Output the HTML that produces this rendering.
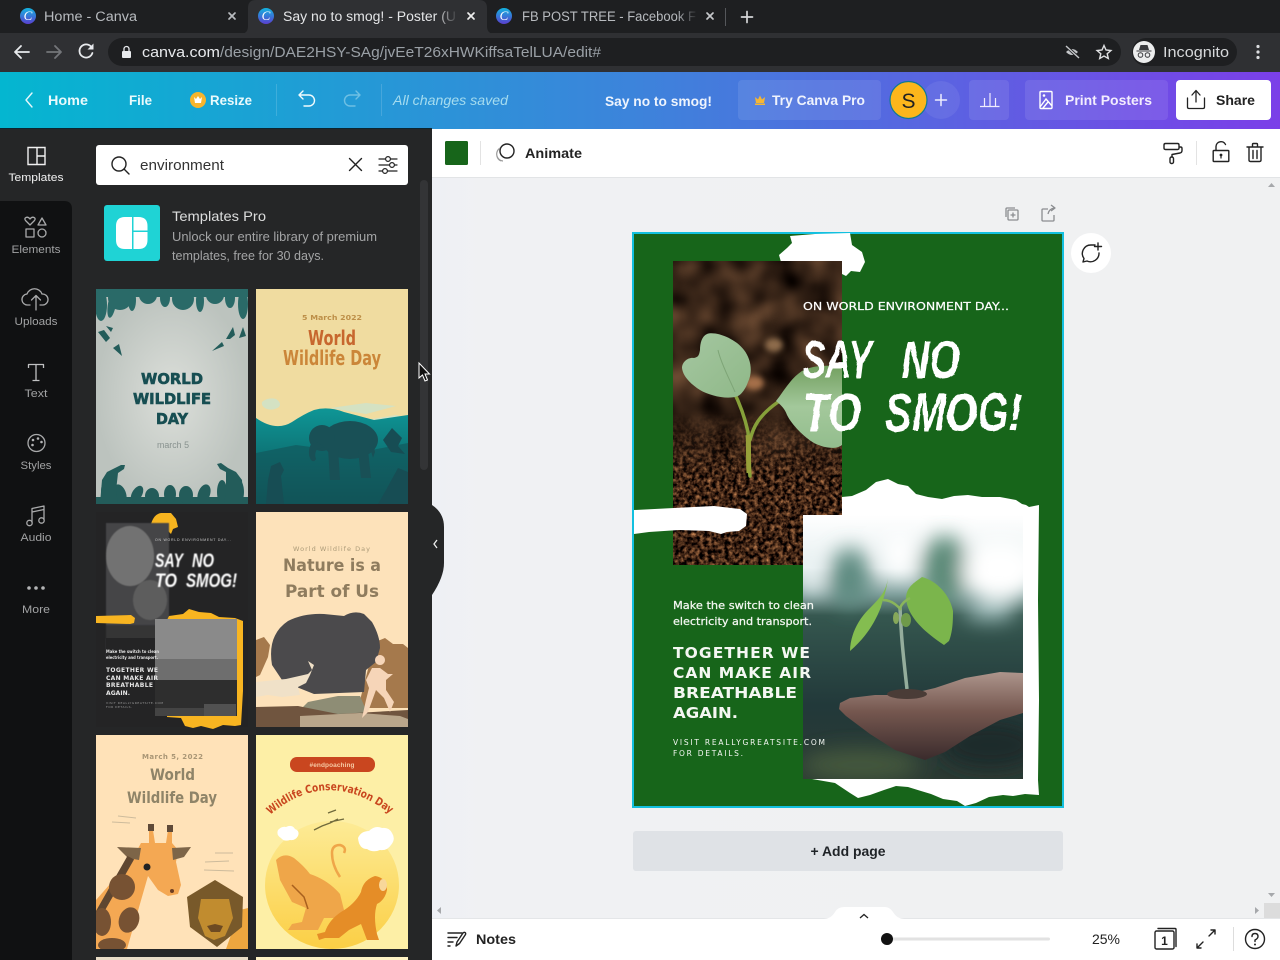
<!DOCTYPE html>
<html><head><meta charset="utf-8"><title>Say no to smog! - Poster</title>
<style>
html,body{margin:0;padding:0;width:1280px;height:960px;overflow:hidden;background:#000}
svg{display:block}
text{font-family:"Liberation Sans",sans-serif}
.d{font-family:"DejaVu Sans",sans-serif}
.ic{fill:none;stroke:#222;stroke-width:1.4;stroke-linecap:round;stroke-linejoin:round}
.si{fill:none;stroke-width:1.3;stroke:#a9aaab;stroke-linejoin:round}
</style></head><body>
<svg width="1280" height="960" viewBox="0 0 1280 960" xmlns="http://www.w3.org/2000/svg">
<defs>
<linearGradient id="hdr" x1="0" x2="1" y1="0" y2="0"><stop offset="0" stop-color="#04b6d0"/><stop offset=".5" stop-color="#3d83db"/><stop offset="1" stop-color="#7b3fe8"/></linearGradient>
<linearGradient id="fav" x1="0" x2="0" y1="0" y2="1"><stop offset="0" stop-color="#12b3df"/><stop offset="1" stop-color="#5a3fd0"/></linearGradient>
<linearGradient id="fade1" x1="0" x2="1"><stop offset="0" stop-color="#2f3033" stop-opacity="0"/><stop offset="1" stop-color="#2f3033"/></linearGradient>
<linearGradient id="fade2" x1="0" x2="1"><stop offset="0" stop-color="#1e1f21" stop-opacity="0"/><stop offset="1" stop-color="#1e1f21"/></linearGradient>
<linearGradient id="canvasbg" x1="0" x2="1"><stop offset="0" stop-color="#eef0f5"/><stop offset=".06" stop-color="#f0f1f3"/><stop offset="1" stop-color="#f0f1f2"/></linearGradient>
<filter id="soilF" x="0" y="0" width="100%" height="100%" color-interpolation-filters="sRGB"><feTurbulence type="fractalNoise" baseFrequency="0.24" numOctaves="3" seed="4"/><feColorMatrix values="1.25 0 0 0 -.38  .88 0 0 0 -.3  .56 0 0 0 -.2  0 0 0 0 1"/></filter>
<filter id="soilB" x="0" y="0" width="100%" height="100%" color-interpolation-filters="sRGB"><feTurbulence type="fractalNoise" baseFrequency="0.03" numOctaves="2" seed="9"/><feColorMatrix values=".55 0 0 0 -.06  .4 0 0 0 -.06  .28 0 0 0 -.05  0 0 0 0 1"/></filter>
<filter id="brush" x="-5%" y="-10%" width="110%" height="120%"><feTurbulence type="fractalNoise" baseFrequency="0.08" numOctaves="2" seed="3" result="n"/><feDisplacementMap in="SourceGraphic" in2="n" scale="3.5" xChannelSelector="R" yChannelSelector="G"/><feGaussianBlur stdDeviation=".35"/></filter>
<linearGradient id="soilMask" x1="0" x2="0" y1="0" y2="1"><stop offset="0" stop-color="#000"/><stop offset=".5" stop-color="#000"/><stop offset=".72" stop-color="#fff"/><stop offset="1" stop-color="#fff"/></linearGradient>
<mask id="soilM" maskUnits="userSpaceOnUse" x="673" y="261" width="169" height="304"><rect x="673" y="261" width="169" height="304" fill="url(#soilMask)"/></mask>
<clipPath id="soilC"><rect x="673" y="261" width="169" height="304"/></clipPath>
<clipPath id="handC"><rect x="803" y="515" width="220" height="264"/></clipPath>
<clipPath id="t1C"><rect x="96" y="289" width="152" height="215"/></clipPath>
<clipPath id="t2C"><rect x="256" y="289" width="152" height="215"/></clipPath>
<clipPath id="t5C"><rect x="96" y="735" width="152" height="214"/></clipPath>
<clipPath id="t6C"><rect x="256" y="735" width="152" height="214"/></clipPath>
<filter id="b12" x="-60%" y="-60%" width="220%" height="220%"><feGaussianBlur stdDeviation="10"/></filter>
<filter id="b1" x="-10%" y="-10%" width="120%" height="120%"><feGaussianBlur stdDeviation=".5"/></filter>
<filter id="b3" x="-30%" y="-30%" width="160%" height="160%"><feGaussianBlur stdDeviation="3"/></filter>
<linearGradient id="leafL" x1="0" y1="0" x2="1" y2="1"><stop offset="0" stop-color="#a5c7a1"/><stop offset="1" stop-color="#8fb888"/></linearGradient>
<linearGradient id="leafR" x1="0" y1="0" x2="0" y2="1"><stop offset="0" stop-color="#73a060"/><stop offset=".5" stop-color="#a3c89b"/><stop offset="1" stop-color="#93bd8d"/></linearGradient>
<linearGradient id="handBg" x1="0" x2="0" y1="0" y2="1"><stop offset="0" stop-color="#ffffff"/><stop offset=".2" stop-color="#e6eff0"/><stop offset=".3" stop-color="#7f9f9c"/><stop offset=".38" stop-color="#35574f"/><stop offset=".72" stop-color="#22393a"/><stop offset="1" stop-color="#2c3a33"/></linearGradient>
<linearGradient id="handSkin" x1="0" x2="0" y1="0" y2="1"><stop offset="0" stop-color="#ad958c"/><stop offset=".45" stop-color="#75574f"/><stop offset="1" stop-color="#3a2b2c"/></linearGradient>
<radialGradient id="t1bg"><stop offset="0" stop-color="#dcdfda"/><stop offset="1" stop-color="#bcc3be"/></radialGradient>
<linearGradient id="t2h" x1="0" x2="0" y1="0" y2="1"><stop offset="0" stop-color="#0f9696"/><stop offset=".5" stop-color="#0d7375"/><stop offset="1" stop-color="#10484b"/></linearGradient>
<linearGradient id="t6c" x1="0" x2="0" y1="0" y2="1"><stop offset="0" stop-color="#fdeb96"/><stop offset="1" stop-color="#fbcf45"/></linearGradient>
<path id="arc" d="M270 815 Q332 762 400 822"/>
</defs>

<!-- Browser chrome -->
<rect width="1280" height="34" fill="#1e1f21"/>
<rect y="33" width="1280" height="39" fill="#2f3033"/>
<path d="M240 34 q8 0 8 -8 V8 q0 -8 8 -8 H479 q8 0 8 8 V26 q0 8 8 8Z" fill="#2f3033"/>
<g fill="url(#fav)"><circle cx="28" cy="16" r="8"/><circle cx="266" cy="16" r="8"/><circle cx="504" cy="16" r="8"/></g>
<g fill="#fff" font-size="13" font-style="italic" text-anchor="middle"><text x="28" y="20" style="font-family:'Liberation Serif',serif">C</text><text x="266" y="20" style="font-family:'Liberation Serif',serif">C</text><text x="504" y="20" style="font-family:'Liberation Serif',serif">C</text></g>
<text x="44" y="21" font-size="13.5" fill="#b8bbbf" textLength="93" lengthAdjust="spacingAndGlyphs">Home - Canva</text>
<text x="283" y="21" font-size="13.5" fill="#e4e5e7" textLength="173" lengthAdjust="spacingAndGlyphs">Say no to smog! - Poster (U</text>
<rect x="436" y="4" width="22" height="24" fill="url(#fade1)"/>
<text x="522" y="21" font-size="13.5" fill="#b8bbbf" textLength="174" lengthAdjust="spacingAndGlyphs">FB POST TREE - Facebook F</text>
<rect x="676" y="4" width="22" height="24" fill="url(#fade2)"/>
<g stroke-width="1.7" fill="none" stroke-linecap="round">
<path d="M229 13l6 6m0-6l-6 6" stroke="#b8bbbf"/><path d="M468 13l6 6m0-6l-6 6" stroke="#eee"/><path d="M707 13l6 6m0-6l-6 6" stroke="#c6c8cb"/>
<path d="M747 11.500v11M741.500 17h11" stroke="#d5d6d8"/></g>
<rect x="725" y="8" width="1" height="18" fill="#55575b"/>
<rect x="108" y="38" width="1013" height="28" rx="14" fill="#1e1f21"/>
<g fill="none" stroke-width="1.800" stroke-linecap="round" stroke-linejoin="round">
<path d="M29 52H15m6-6l-6 6 6 6" stroke="#e8eaed"/><path d="M47 52h14m-6-6l6 6-6 6" stroke="#74767a"/>
<path d="M92 48a6.600 6.600 0 1 0 .4 5" stroke="#e8eaed"/></g><path d="M93.500 43.500v6h-6z" fill="#e8eaed"/>
<rect x="122" y="51" width="9" height="7" rx="1" fill="#e8eaed"/><path d="M124 51v-2a2.500 2.500 0 0 1 5 0v2" fill="none" stroke="#e8eaed" stroke-width="1.300"/>
<text x="142" y="57" font-size="14.500" fill="#e8eaed" textLength="78" lengthAdjust="spacingAndGlyphs">canva.com</text>
<text x="220" y="57" font-size="14.500" fill="#9aa0a6" textLength="381" lengthAdjust="spacingAndGlyphs">/design/DAE2HSY-SAg/jvEeT26xHWKiffsaTelLUA/edit#</text>
<path d="M1066 52q6-6 12 0q-6 6-12 0z" fill="#c5c7ca"/><path d="M1066 46l13 12" stroke="#1e1f21" stroke-width="3"/><path d="M1066 46l13 12" stroke="#c5c7ca" stroke-width="1.400"/>
<path d="M1104 45.500l2 4.500 4.900.500-3.700 3.200 1.100 4.800-4.300-2.500-4.300 2.500 1.100-4.800-3.700-3.200 4.900-.500z" fill="none" stroke="#dfe0e2" stroke-width="1.400"/>
<rect x="1132" y="38" width="105" height="28" rx="14" fill="#1e1f21"/>
<circle cx="1144" cy="52" r="11" fill="#eceded"/>
<path d="M1139 50l1.500-5h7l1.500 5zM1136.500 50.500h15v1h-15z" fill="#3a3b3e"/><circle cx="1140.500" cy="55" r="2.300" fill="none" stroke="#3a3b3e"/><circle cx="1147.500" cy="55" r="2.300" fill="none" stroke="#3a3b3e"/>
<text x="1163" y="57" font-size="14.500" fill="#d6d8da" textLength="66" lengthAdjust="spacingAndGlyphs">Incognito</text>
<g fill="#dcdde0"><circle cx="1258" cy="46.500" r="1.600"/><circle cx="1258" cy="52" r="1.600"/><circle cx="1258" cy="57.500" r="1.600"/></g>

<!-- Canva header -->
<rect y="72" width="1280" height="57" fill="url(#hdr)"/>
<rect x="0" y="128" width="432" height="1" fill="#0b2530"/>
<path d="M32 93l-6 7 6 7" fill="none" stroke="#e6f7fb" stroke-width="1.400" stroke-linecap="round" stroke-linejoin="round"/>
<g fill="#fff" font-size="14" font-weight="bold">
<text x="48" y="105" textLength="40" lengthAdjust="spacingAndGlyphs" fill="#e9fafc">Home</text>
<text x="129" y="105" textLength="23" lengthAdjust="spacingAndGlyphs" fill="#e9fafc">File</text>
<text x="210" y="105" textLength="42" lengthAdjust="spacingAndGlyphs" fill="#e9fafc">Resize</text>
<text x="605" y="106" textLength="107" lengthAdjust="spacingAndGlyphs" fill="#eef4fd">Say no to smog!</text>
<text x="772" y="105" textLength="93" lengthAdjust="spacingAndGlyphs" fill="#eef2fd">Try Canva Pro</text>
<text x="1065" y="105" textLength="87" lengthAdjust="spacingAndGlyphs" fill="#f2ecfe">Print Posters</text>
</g>
<circle cx="198" cy="100" r="8" fill="#f6b52c"/><path d="M194 97l2 2 2-3 2 3 2-2-1 6h-6z" fill="#fff"/>
<rect x="276" y="84" width="1" height="32" fill="#fff" opacity=".15"/><rect x="381" y="84" width="1" height="32" fill="#fff" opacity=".15"/>
<path d="M299 95h10a5.500 5.500 0 0 1 0 11h-5M303 91l-4 4 4 4" fill="none" stroke="#f0fbfd" stroke-width="1.400" stroke-linecap="round" stroke-linejoin="round"/>
<path d="M360 95h-10a5.500 5.500 0 0 0 0 11h5M356 91l4 4-4 4" fill="none" stroke="#8fd0ea" stroke-width="1.400" stroke-linecap="round" stroke-linejoin="round" opacity=".7"/>
<text x="393" y="105" font-size="14" font-style="italic" fill="#a5dcef" textLength="115" lengthAdjust="spacingAndGlyphs">All changes saved</text>
<g fill="#fff" fill-opacity=".09">
<rect x="738" y="80" width="143" height="40" rx="4"/><circle cx="941" cy="100" r="19" fill-opacity=".07"/><rect x="969" y="80" width="40" height="40" rx="4"/><rect x="1025" y="80" width="143" height="40" rx="4"/></g>
<path d="M755 97l3 2.500 2-4 2 4 3-2.500-1 6h-8z" fill="#f7b733"/><rect x="755" y="103.500" width="10" height="1.500" fill="#f7b733"/>
<circle cx="908.500" cy="100" r="18.500" fill="#fcb61c" stroke="#0f7a94" stroke-width="1.200"/>
<text x="908.500" y="108" font-size="21" fill="#222" text-anchor="middle">S</text>
<path d="M941 94.500v11M935.500 100h11" stroke="#eef" stroke-width="1.500" stroke-linecap="round"/>
<path d="M980 106.500h19.500M984.500 106v-8M990 106V93M995.500 106v-8" stroke="#f0ecfe" stroke-width="1.200" fill="none"/>
<path d="M1040 92.500q0-1 1-1h10q1 0 1 1v15q0 1-1 1h-10q-1 0-1-1zM1040 107l6-8 6 7M1043 108l5-6" fill="none" stroke="#fff" stroke-width="1.400"/><circle cx="1044" cy="95.500" r="1.300" fill="#fff"/>
<rect x="1176" y="80" width="95" height="40" rx="4" fill="#fff"/>
<path d="M1187.500 98v9q0 1.500 1.500 1.500h14q1.500 0 1.500-1.500v-9M1196 102V91M1192 95l4-4.500 4 4.500" fill="none" stroke="#222" stroke-width="1.300" stroke-linecap="round" stroke-linejoin="round"/>
<text x="1216" y="105" font-size="14" font-weight="bold" fill="#222" textLength="39" lengthAdjust="spacingAndGlyphs">Share</text>

<!-- Canvas region -->
<rect x="432" y="129" width="848" height="790" fill="url(#canvasbg)"/>
<rect x="432" y="129" width="848" height="48" fill="#fff"/><rect x="432" y="177" width="848" height="1" fill="#e2e4e6"/>
<rect x="445" y="141" width="23" height="24" rx="1.500" fill="#17651a"/><rect x="480" y="141" width="1" height="24" fill="#e3e3e3"/>
<circle cx="507" cy="151" r="7" fill="none" stroke="#222" stroke-width="1.400"/><path d="M500 148a7.500 7.500 0 0 0 1 13 M497 152a7 7 0 0 0 6 9" fill="none" stroke="#999" stroke-width="1.200"/>
<text x="525" y="158" font-size="14" font-weight="bold" fill="#222" textLength="57" lengthAdjust="spacingAndGlyphs">Animate</text>
<g class="ic"><path d="M1164 145q0-1.500 1.500-1.500h12q1.500 0 1.500 1.500v3q0 1.500-1.500 1.500h-12q-1.500 0-1.500-1.500zM1179 147h1.500q1.500 0 1.500 1.500v2q0 2-2 2.500l-8 1.500v2"/><rect x="1170" y="157" width="3.500" height="6.500" rx="1.500"/>
<path d="M1214 150.500h14q.8 0 .8.8v9.400q0 .8-.8.8h-14q-.8 0-.8-.8v-9.400q0-.8.8-.8zM1216 150v-3.500a5 5 0 0 1 9.500-2"/>
<path d="M1247 147h16M1252.500 146.500v-2q0-1 1-1h3q1 0 1 1v2M1249 147.500v12.500q0 1.500 1.500 1.500h9q1.500 0 1.500-1.500v-12.500M1253 150.500v8M1257 150.500v8"/></g>
<rect x="1196" y="141" width="1" height="24" fill="#e3e3e3"/>
<circle cx="1221" cy="155" r="1.400" fill="#222"/><rect x="1220.400" y="155" width="1.200" height="3.500" fill="#222"/>
<g fill="none" stroke="#8b8d90" stroke-width="1.300" stroke-linejoin="round"><rect x="1008" y="210" width="10" height="10" rx="1"/><path d="M1006 217v-8q0-1 1-1h8"/><path d="M1013 212.500v5M1010.500 215h5"/><path d="M1048 209h-5q-1 0-1 1v10q0 1 1 1h10q1 0 1-1v-5M1048 214q1-5 6-6M1051 205l4 3-4 3"/></g>
<path d="M1268 187l3.500-4 3.500 4z" fill="#a6a8ab"/><path d="M1268 893l3.500 4 3.500-4z" fill="#a6a8ab"/>
<rect x="1264" y="903" width="16" height="16" fill="#dcdcdc"/>
<path d="M441 907l-4 3.500 4 3.500z" fill="#a6a8ab"/><path d="M1255 907l4 3.500-4 3.500z" fill="#a6a8ab"/>

<!-- Poster -->
<rect x="633" y="233" width="430" height="574" fill="#17651a" stroke="#13c0df" stroke-width="2"/>
<path d="M790 236L815 234L850 233L852 245L862 252L865 262L860 272L851 271L846 276L842 274L842 262L781 262L779 255L787 248L792 243Z" fill="#fff"/>
<g clip-path="url(#soilC)">
<rect x="673" y="261" width="169" height="304" filter="url(#soilB)"/>
<g mask="url(#soilM)"><rect x="673" y="261" width="169" height="304" filter="url(#soilF)"/></g>
<g filter="url(#b3)"><ellipse cx="774" cy="345" rx="9" ry="7" fill="#8e6c4c"/><ellipse cx="754" cy="383" rx="10" ry="7" fill="#a56f48"/></g>
<path d="M750 476c-2-20-1-35-2-44-3-14-8-28-15-42M750 440c3-12 8-24 28-38" fill="none" stroke="#86a03a" stroke-width="3.500" stroke-linecap="round"/>
<path d="M749 473c-1-18 0-28-1-38" stroke="#97a03a" stroke-width="5" fill="none"/>
<path d="M707 334c8-3 28 4 37 16 7 9 9 22 4 32-2 6-6 12-10 14-10 4-28 0-38-6-8-5-17-13-18-22 0-6 6-11 12-10 4-1 5-2 6-8 0-7 2-14 7-16z" fill="url(#leafL)"/>
<path d="M735 392c-4-10-14-28-17-42" stroke="#7ea577" stroke-width="1" fill="none"/>
<path d="M776 401c8-10 14-22 26-30 12-6 26-6 40-4v78c-6 5-18 3-28-2-10-6-22-18-27-28-2-6-6-10-11-14z" fill="url(#leafR)"/>
</g>
<g filter="url(#brush)" fill="#fff" font-weight="bold" font-style="italic">
<text x="802" y="378" font-size="54" textLength="70" lengthAdjust="spacingAndGlyphs">SAY</text>
<text x="901" y="378" font-size="54" textLength="59" lengthAdjust="spacingAndGlyphs">NO</text>
<text x="803" y="431" font-size="54" textLength="58" lengthAdjust="spacingAndGlyphs">TO</text>
<text x="885" y="431" font-size="54" textLength="137" lengthAdjust="spacingAndGlyphs">SMOG!</text>
</g>
<text class="d" x="803" y="310" font-size="11" fill="#fff" stroke="#fff" stroke-width=".2" textLength="206" lengthAdjust="spacingAndGlyphs">ON WORLD ENVIRONMENT DAY...</text>
<path d="M634 510l40-2 40-2 26 3 7 5-1 12-7 5-12 1-6 2-12-3-30-1-30 2-15 2z" fill="#fff"/>
<path d="M842 497L852 496L866 490L876 482L888 479L898 484L908 486L916 494L928 497L942 499L954 496L968 495L982 497L1000 497L1016 500L1022 504L1026 505L1029 507L1039 505L1038 600L1039 700L1038 780L1039 795L1025 794L1013 796L1003 795L989 797L976 803L965 806L957 801L943 799L931 794L921 791L908 787L896 786L884 790L870 795L858 798L850 793L835 783L812 779L803 515L842 515Z" fill="#fff"/>
<g clip-path="url(#handC)">
<rect x="803" y="515" width="220" height="264" fill="url(#handBg)"/>
<g filter="url(#b12)">
<ellipse cx="850" cy="578" rx="20" ry="30" fill="#5d8a80"/>
<ellipse cx="945" cy="570" rx="24" ry="34" fill="#5b8a78"/>
<ellipse cx="1000" cy="570" rx="38" ry="30" fill="#ffffff"/>
<ellipse cx="900" cy="555" rx="16" ry="22" fill="#fff"/>
<ellipse cx="812" cy="580" rx="10" ry="16" fill="#f2f8f9"/>
<ellipse cx="990" cy="610" rx="26" ry="10" fill="#a8c6c6"/>
<ellipse cx="860" cy="765" rx="60" ry="16" fill="#45593e"/>
<ellipse cx="990" cy="745" rx="50" ry="24" fill="#1b2a2c"/>
</g>
<path d="M1023 673L1000 672L965 678L935 688L905 695L875 695L850 698L840 703L839 709L846 716L870 734L895 750L925 760L945 752L970 736L1000 720L1023 713Z" fill="url(#handSkin)"/>
<path d="M900 607c1 30 4 55 7 82" fill="none" stroke="#94ad9c" stroke-width="3.500"/>
<ellipse cx="907" cy="694" rx="20" ry="5" fill="#4a3c37"/>
<path d="M888 578c-2 14-8 20-20 32-10 10-18 26-18 41 14-12 24-26 31-44 2-8 5-14 7-29z" fill="#84bd50"/>
<path d="M922 577c-8 6-16 10-16 22 2 16 14 30 38 46l5-4c4-10 4-22 4-30-3-16-16-30-31-34z" fill="#7bb54c"/>
<path d="M883 600c8 0 14 5 18 10M910 598c-4 2-8 5-10 10" fill="none" stroke="#8ab55b" stroke-width="2.500"/>
<ellipse cx="906" cy="620" rx="5" ry="7" fill="#6f9a4a"/><ellipse cx="896" cy="618" rx="3" ry="6" fill="#86a85a"/>
</g>
<g fill="#f4f7f2" stroke="#f4f7f2" stroke-width=".25">
<text class="d" x="673" y="609" font-size="11" textLength="141" lengthAdjust="spacingAndGlyphs">Make the switch to clean</text>
<text class="d" x="673" y="625" font-size="11" textLength="139" lengthAdjust="spacingAndGlyphs">electricity and transport.</text></g>
<g fill="#f4f7f2">
<text class="d" x="673" y="658" font-size="15.500" font-weight="bold" textLength="137" lengthAdjust="spacing">TOGETHER WE</text>
<text class="d" x="673" y="678" font-size="15.500" font-weight="bold" textLength="138" lengthAdjust="spacing">CAN MAKE AIR</text>
<text class="d" x="673" y="698" font-size="15.500" font-weight="bold" textLength="124" lengthAdjust="spacingAndGlyphs">BREATHABLE</text>
<text class="d" x="673" y="718" font-size="15.500" font-weight="bold" textLength="65" lengthAdjust="spacingAndGlyphs">AGAIN.</text>
<text class="d" x="673" y="745" font-size="7.500" textLength="152" lengthAdjust="spacing">VISIT REALLYGREATSITE.COM</text>
<text class="d" x="673" y="756" font-size="7.500" textLength="70" lengthAdjust="spacing">FOR DETAILS.</text>
</g>
<circle cx="1091" cy="253" r="20" fill="#fff"/>
<path d="M1095 245h-4a8.500 8.500 0 0 0-7 13.500l-1 3.500 4-1a8.500 8.500 0 0 0 12-8M1098 243v7M1094.500 246.500h7" fill="none" stroke="#222" stroke-width="1.400" stroke-linecap="round" stroke-linejoin="round"/>
<rect x="633" y="831" width="430" height="40" rx="3" fill="#dfe2e6"/>
<text x="848" y="856" font-size="14" font-weight="bold" fill="#1f2327" text-anchor="middle" textLength="75" lengthAdjust="spacingAndGlyphs">+ Add page</text>

<!-- Footer -->
<rect x="432" y="919" width="848" height="41" fill="#fff"/><rect x="432" y="918" width="848" height="1" fill="#e4e6e8"/>
<path d="M823 919q8 0 12-7 3-5 9-5h40q6 0 9 5 4 7 12 7z" fill="#fff"/>
<path d="M860 918l4-3.500 4 3.500" fill="none" stroke="#222" stroke-width="1.300"/>
<g fill="none" stroke="#222" stroke-width="1.400" stroke-linecap="round" stroke-linejoin="round"><path d="M448 933h14M448 937.500h9M448 942h5M448 946h2"/><path d="M456 946l1-4 6-9q1-1 2-.5t.5 2l-6 9z"/></g>
<text x="476" y="944" font-size="14" font-weight="bold" fill="#222" textLength="40" lengthAdjust="spacingAndGlyphs">Notes</text>
<rect x="892" y="937.500" width="158" height="3" rx="1.500" fill="#e2e2e2"/><circle cx="887" cy="939" r="6" fill="#111"/>
<text x="1092" y="944" font-size="14" fill="#222" textLength="28" lengthAdjust="spacingAndGlyphs">25%</text>
<g fill="none" stroke="#222" stroke-width="1.400" stroke-linejoin="round" stroke-linecap="round"><rect x="1155" y="931" width="19" height="18" rx="1.500"/><path d="M1158 928.500h17q1 0 1 1v17"/>
<path d="M1209 936l6-6M1211 930h4v4M1203 942l-6 6M1201 948h-4v-4"/><circle cx="1255" cy="939" r="9.500"/><path d="M1252 936.500q0-3 3-3t3 3q0 2-3 3.500v1.500"/></g>
<text x="1164.500" y="945" font-size="12" font-weight="bold" fill="#222" text-anchor="middle">1</text><circle cx="1255" cy="944.500" r="1" fill="#222"/>
<rect x="1233" y="927" width="1" height="24" fill="#ddd"/>

<!-- Panel -->
<rect x="0" y="129" width="432" height="831" fill="#252627"/>
<path d="M432 505q12 8 12 22v36q0 14-12 32z" fill="#252627"/>
<path d="M437 540l-3 4 3 4" fill="none" stroke="#eee" stroke-width="1.300"/>
<rect x="0" y="201" width="72" height="759" fill="#101112"/><path d="M64 201h8v8q0-8-8-8z" fill="#252627"/>
<rect x="420" y="180" width="8" height="290" rx="4" fill="#333436"/>
<path d="M419 363v15l3.500-3 2.500 6 2.500-1-2.500-6h4.500z" fill="#111" stroke="#fff" stroke-width="1"/>
<rect x="96" y="145" width="312" height="40" rx="3" fill="#fff"/>
<g fill="none" stroke="#222" stroke-width="1.400" stroke-linecap="round"><circle cx="119" cy="164" r="7"/><path d="M124 169l5 5"/><path d="M349.500 158.500l12 12m0-12l-12 12"/><path d="M379 159h18M379 165h18M379 171h18" stroke-width="1.200"/></g>
<g fill="#fff" stroke="#222" stroke-width="1.200"><circle cx="388" cy="159" r="2.400"/><circle cx="392" cy="165" r="2.400"/><circle cx="385" cy="171" r="2.400"/></g>
<text x="140" y="170" font-size="14.500" fill="#333" textLength="84" lengthAdjust="spacingAndGlyphs">environment</text>
<rect x="104" y="205" width="56" height="56" rx="3" fill="#1fd3d5"/>
<path d="M116 226q0-9 9-9h7v32h-7q-9 0-9-9z M133.500 217h5q9 0 9 9v4.500h-14z M133.500 232h14v8q0 9-9 9h-5z" fill="#fff"/>
<text x="172" y="221" font-size="14" fill="#dcdddd" textLength="94" lengthAdjust="spacingAndGlyphs">Templates Pro</text>
<text x="172" y="241" font-size="12.500" fill="#a3a4a5" textLength="205" lengthAdjust="spacingAndGlyphs">Unlock our entire library of premium</text>
<text x="172" y="260" font-size="12.500" fill="#a3a4a5" textLength="152" lengthAdjust="spacingAndGlyphs">templates, free for 30 days.</text>

<!-- Sidebar -->
<g font-size="11" text-anchor="middle" fill="#a1a2a3">
<text x="36" y="181" fill="#f2f2f2" textLength="55" lengthAdjust="spacingAndGlyphs">Templates</text>
<text x="36" y="253" textLength="49" lengthAdjust="spacingAndGlyphs">Elements</text>
<text x="36" y="325" textLength="43" lengthAdjust="spacingAndGlyphs">Uploads</text>
<text x="36" y="397" textLength="23" lengthAdjust="spacingAndGlyphs">Text</text>
<text x="36" y="469" textLength="31" lengthAdjust="spacingAndGlyphs">Styles</text>
<text x="36" y="541" textLength="31" lengthAdjust="spacingAndGlyphs">Audio</text>
<text x="36" y="613" textLength="28" lengthAdjust="spacingAndGlyphs">More</text></g>
<path d="M28 147.500h17v17H28zM37 147.500v17M37 156h8" fill="none" stroke="#f0f0f0" stroke-width="1.400"/>
<g class="si">
<path d="M30 225l-4.500-4.500q-1.500-2 .5-3 2-1 4 1.500 2-2.500 4-1.500 2 1 .5 3zM38 225l4-7 4 7zM26 229h8v8h-8z"/><circle cx="42" cy="233" r="4"/>
<path d="M30 305h-2a5.500 5.500 0 0 1-1-11 8 8 0 0 1 15 0 5.500 5.500 0 0 1 1 11h-3M36 310v-14M31.500 300l4.500-4.500 4.500 4.500" stroke-linecap="round"/>
<path d="M28.500 368v-3.500h15v3.500M36 364.500v16M32.500 380.500h7" stroke="#c0c1c2"/>
<circle cx="36.500" cy="443" r="8.500"/>
<path d="M32 522.500v-14l12-2.500v14" /><circle cx="29.500" cy="523" r="2.700"/><circle cx="41.500" cy="520.500" r="2.700"/><path d="M32 512l12-2.500"/></g>
<g fill="#b4b5b6"><circle cx="33" cy="440" r="1.300"/><circle cx="38" cy="438.500" r="1.300"/><circle cx="41.500" cy="442" r="1.300"/><circle cx="32.500" cy="445" r="1.300"/><circle cx="29" cy="588" r="1.800"/><circle cx="36" cy="588" r="1.800"/><circle cx="43" cy="588" r="1.800"/></g>

<!-- T1 -->
<rect x="96" y="289" width="152" height="215" fill="url(#t1bg)"/>
<g clip-path="url(#t1C)">
<g fill="#2a6a68">
<rect x="96" y="289" width="152" height="8"/>
<circle cx="120" cy="298" r="12"/><circle cx="183" cy="299" r="11"/><circle cx="148" cy="295" r="9"/><circle cx="215" cy="295" r="9"/>
<ellipse cx="101" cy="305" rx="6" ry="16"/><ellipse cx="112" cy="304" rx="4" ry="14" transform="rotate(10 112 304)"/><ellipse cx="132" cy="300" rx="4" ry="11"/>
<ellipse cx="165" cy="298" rx="5" ry="9"/><ellipse cx="200" cy="301" rx="4" ry="11"/>
<ellipse cx="243" cy="304" rx="5" ry="15"/><ellipse cx="230" cy="298" rx="5" ry="10"/>
</g>
<g fill="#235c5a">
<rect x="96" y="497" width="152" height="8"/>
<ellipse cx="106" cy="492" rx="5" ry="12"/><ellipse cx="120" cy="494" rx="6" ry="10" transform="rotate(-20 120 494)"/><ellipse cx="137" cy="494" rx="5" ry="9" transform="rotate(30 137 494)"/>
<ellipse cx="152" cy="496" rx="7" ry="8"/><ellipse cx="170" cy="494" rx="6" ry="9"/><ellipse cx="186" cy="495" rx="7" ry="9"/><ellipse cx="204" cy="494" rx="6" ry="10" transform="rotate(20 204 494)"/><ellipse cx="222" cy="492" rx="5" ry="12"/><ellipse cx="238" cy="492" rx="6" ry="13"/>
<path d="M100 504l2-24 5-8 8-4 6-3 4 0 -1 4-6 4-2 18 2 13zM243 504l-1-24-6-8-8-4-7-5-4 1 3 5 6 3 0 20-2 12z"/>
<path d="M98 332l8 10 4-4-6-8zM113 348l9 8-3-12zM106 326l5 6 2-4zM212 351l10-9 2 4zM226 339l7-12 2 8-5 4zM243 327l3 9-7 2z"/>
</g></g>
<g fill="#174e52" font-weight="bold">
<text class="d" x="141" y="384" font-size="15" textLength="62" lengthAdjust="spacingAndGlyphs" stroke="#174e52" stroke-width=".6">WORLD</text>
<text class="d" x="133" y="404" font-size="15" textLength="78" lengthAdjust="spacingAndGlyphs" stroke="#174e52" stroke-width=".6">WILDLIFE</text>
<text class="d" x="156" y="424" font-size="15" textLength="32" lengthAdjust="spacingAndGlyphs" stroke="#174e52" stroke-width=".6">DAY</text></g>
<text x="157" y="448" font-size="9" fill="#88928f" textLength="32" lengthAdjust="spacingAndGlyphs">march 5</text>

<!-- T2 -->
<rect x="256" y="289" width="152" height="215" fill="#f0dca0"/>
<text class="d" x="302" y="320" font-size="7" font-weight="bold" fill="#bd8f48" textLength="60" lengthAdjust="spacingAndGlyphs">5 March 2022</text>
<text class="d" x="308" y="345" font-size="20" font-weight="bold" fill="#c7672e" textLength="48" lengthAdjust="spacingAndGlyphs">World</text>
<text class="d" x="283" y="365" font-size="20" font-weight="bold" fill="#cb8639" textLength="98" lengthAdjust="spacingAndGlyphs">Wildlife Day</text>
<g clip-path="url(#t2C)">
<path d="M262 402q6-5 14-3 6 4 3 8-6 4-12 2-6-2-5-7zM330 408l36-5 30 3-30 8zM366 420l30-5 12 3v5l-20 2z" fill="#c8e4d2" opacity=".7"/>
<path d="M256 418q20 14 36 4 12-8 22-12 14-4 30 2l30 8 34-5v90H256z" fill="url(#t2h)"/>
<path d="M256 453l40-8 60 8 52-10v61H256z" fill="#12595d" opacity=".7"/>
<g fill="#195056"><ellipse cx="350" cy="440" rx="28" ry="19"/><circle cx="322" cy="438" r="13"/><path d="M313 440q-7 12-2 20 3 3 5-1-2-5 1-10l8-2zM328 448h10l2 32h-10zM358 450h10l3 28h-10zM372 438l3 14-2 6-4-14z"/></g>
<path d="M392 428l10 10-4 8 7 8-14-2-8-12zM386 490l12-22 10 4v32h-30zM268 480l3-14 9-4 4 8-3 6 3 28h-18z" fill="#174d54"/>
</g>

<!-- T3 -->
<rect x="96" y="512" width="152" height="215" fill="#242425"/>
<path d="M147 530l4-6q3-10 10-11h10l5 6 2 8-5 2-2 5-4-4-20 2z" fill="#f6b41f"/>
<g filter="url(#b1)"><rect x="106" y="523" width="63" height="136" fill="#454546"/><ellipse cx="130" cy="556" rx="24" ry="30" fill="#727272"/><ellipse cx="150" cy="600" rx="17" ry="20" fill="#5d5d5d"/><rect x="106" y="625" width="63" height="14" fill="#353536"/></g>
<rect x="106" y="638" width="63" height="22" fill="#242425"/>
<path d="M96 616l35-1 4 3-1 5-4 1-34-1z" fill="#f8b521"/>
<path d="M165 624l4-8 14-2 6-5 10 3 12 1 8 4 16 1 8 3 0 70-2 34-6 1-12-1-10 4-12-3-8 2-8-2-4-8-14-1-1-90z" fill="#f8b521"/>
<rect x="155" y="619" width="82" height="97" fill="#6e6e6e"/><rect x="155" y="619" width="82" height="40" fill="#8a8a8a"/><rect x="155" y="680" width="82" height="36" fill="#2e2e2e"/>
<rect x="155" y="708" width="60" height="8" fill="#444"/><rect x="204" y="704" width="32" height="12" fill="#515151"/>
<rect x="96" y="660" width="59" height="66" fill="#242425"/><rect x="155" y="716" width="12" height="11" fill="#242425"/>
<text x="155" y="541" font-size="3.500" fill="#ccc" textLength="76" lengthAdjust="spacing">ON WORLD ENVIRONMENT DAY...</text>
<g fill="#fff" font-weight="bold" font-style="italic" filter="url(#b1)">
<text x="155" y="567" font-size="19" textLength="28" lengthAdjust="spacingAndGlyphs">SAY</text><text x="192" y="567" font-size="19" textLength="22" lengthAdjust="spacingAndGlyphs">NO</text>
<text x="155" y="587" font-size="19" textLength="22" lengthAdjust="spacingAndGlyphs">TO</text><text x="186" y="587" font-size="19" textLength="51" lengthAdjust="spacingAndGlyphs">SMOG!</text></g>
<g fill="#e6e6e6">
<text class="d" x="106" y="653" font-size="4" font-weight="bold" textLength="53" lengthAdjust="spacingAndGlyphs">Make the switch to clean</text>
<text class="d" x="106" y="659" font-size="4" font-weight="bold" textLength="52" lengthAdjust="spacingAndGlyphs">electricity and transport.</text>
<text class="d" x="106" y="672" font-size="6" font-weight="bold" textLength="52" lengthAdjust="spacing">TOGETHER WE</text>
<text class="d" x="106" y="680" font-size="6" font-weight="bold" textLength="52" lengthAdjust="spacing">CAN MAKE AIR</text>
<text class="d" x="106" y="687" font-size="6" font-weight="bold" textLength="47" lengthAdjust="spacing">BREATHABLE</text>
<text class="d" x="106" y="695" font-size="6" font-weight="bold" textLength="24" lengthAdjust="spacing">AGAIN.</text>
<text class="d" x="106" y="704" font-size="3" fill="#999" textLength="57" lengthAdjust="spacing">VISIT REALLYGREATSITE.COM</text>
<text class="d" x="106" y="708" font-size="3" fill="#999" textLength="26" lengthAdjust="spacing">FOR DETAILS.</text></g>

<!-- T4 -->
<rect x="256" y="512" width="152" height="215" fill="#fde2ba"/>
<text class="d" x="293" y="551" font-size="6.500" fill="#ab9a78" textLength="77" lengthAdjust="spacing">World Wildlife Day</text>
<text class="d" x="283" y="571" font-size="17" font-weight="bold" fill="#8f7c5e" textLength="98" lengthAdjust="spacingAndGlyphs">Nature is a</text>
<text class="d" x="285" y="597" font-size="17" font-weight="bold" fill="#8f7c5e" textLength="94" lengthAdjust="spacingAndGlyphs">Part of Us</text>
<path d="M375 642l10-4 8 6 10 0 5 4v60h-50zM256 640l8-3 6 8-2 12-8 18-4 2z" fill="#a5794c"/>
<path d="M272 665q-5-30 16-44 16-8 36-7l20 2q10-6 20-2l8 8q8 14 8 26l-4 14-10 8-2 22-50 2-20-8-12-6z" fill="#4b4a4c"/>
<path d="M256 682l30-3 22-5 4-4-4-9 6 4-4 10-4 8-8 4 2 8-18 2-14-2-12 2z" fill="#f0e1c8"/>
<path d="M298 712l10-10 30-6 22 0 6 14-6 10-60 0z" fill="#8e8d75"/>
<path d="M256 707l42-1 40 8 70-4v17H256z" fill="#70553f"/><path d="M300 716l60-3 40 3 8 3v8H300z" fill="#d9c9ac" opacity=".7"/>
<path d="M375 660a5 5 0 1 1 0 .1zM372 668l8 0 8 6 5 0-7 6 0 10 8 12-4 10-6-14-8-8-8 22-6 6 4-18 3-12-3-8z" fill="#f6d5b8"/>

<!-- T5 -->
<rect x="96" y="735" width="152" height="214" fill="#ffe2b8"/>
<text class="d" x="142" y="759" font-size="7" font-weight="bold" fill="#a99675" textLength="61" lengthAdjust="spacing">March 5, 2022</text>
<text class="d" x="150" y="780" font-size="16" font-weight="bold" fill="#8f8468" textLength="45" lengthAdjust="spacingAndGlyphs">World</text>
<text class="d" x="127" y="803" font-size="16" font-weight="bold" fill="#8f8468" textLength="90" lengthAdjust="spacingAndGlyphs">Wildlife Day</text>
<g clip-path="url(#t5C)">
<path d="M96 900L133 858L141 843L149 843L149 830L153 830L155 843L166 843L168 830L172 830L172 843L178 850L176 862L181 885L178 894L168 896L158 890L148 876L127 949H96Z" fill="#f4a853"/>
<path d="M117 847L141 848L139 860L128 858ZM191 847L172 848L173 860L184 857Z" fill="#7d6548"/>
<path d="M132 860L96 923V914L128 858Z" fill="#5f4630" stroke="#5f4630" stroke-width="3"/>
<rect x="148" y="824" width="6" height="7" fill="#5f4a38"/><rect x="167" y="825" width="6" height="7" fill="#5f4a38"/>
<circle cx="147" cy="867" r="3.500" fill="#222"/><circle cx="172" cy="891" r="2" fill="#6c3d21"/>
<g fill="#775233"><ellipse cx="122" cy="887" rx="13" ry="13"/><ellipse cx="102" cy="922" rx="9" ry="14"/><ellipse cx="129" cy="920" rx="10" ry="13" transform="rotate(20 129 920)"/><ellipse cx="112" cy="945" rx="14" ry="7"/></g>
<path d="M240 910L248 908V949H226Z" fill="#eda63f"/>
<path d="M215 880L243 897L242 927L217 947L190 927L187 897Z" fill="#78592a"/>
<path d="M201 899L229 899L233 918L225 936L214 940L205 936L198 918Z" fill="#c18c2f"/><path d="M207 926l8-2 8 2-3 6-9 0z" fill="#6d4a22"/>
<g stroke="#cdbb9c" fill="none" stroke-width="1"><path d="M205 862l24-1M215 853l18 0M204 870l30 1M118 816l18 2M112 822l18 1"/></g>
</g>

<!-- T6 -->
<rect x="256" y="735" width="152" height="214" fill="#fdefa6"/>
<g clip-path="url(#t6C)">
<ellipse cx="332" cy="885" rx="67" ry="64" fill="url(#t6c)"/>
<path d="M278 830q4-4 8-3 6-3 9 2 5 2 3 7-3 5-8 4-6 2-9-2-5-3-3-8zM358 838q3-7 11-7 6-6 13-3 7-1 10 5 4 6-1 12-4 6-11 5-7 3-13-1-8 0-9-11z" fill="#fff"/>
<path d="M340 877q-8-12-8-24 0-8 8-8 7 2 4 8" fill="none" stroke="#efa649" stroke-width="2.500"/>
<path d="M276 860q8-8 18-2 10 8 16 16 18 6 30 20l4 16-6 8-14 0-6 12-30 0 4-6 10-2 4-14-14-6-12-22z" fill="#efa649"/>
<path d="M292 885l12 12 4 12" fill="none" stroke="#a8601e" stroke-width="1.500"/>
<path d="M317 934l8-2q4-12 16-20 14-8 20-20 2-12 14-16 12 2 12 14-2 10-10 14-4 12 0 30l2 6h-12l-6-16-12 6-10 8h-14l-6 2z" fill="#e58d27"/>
<ellipse cx="383" cy="885" rx="4" ry="6" fill="#f8d79a"/>
</g>
<rect x="290" y="757" width="85" height="15" rx="7" fill="#c9461f"/>
<text x="332" y="767" font-size="6.500" font-weight="bold" fill="#f6c9a3" text-anchor="middle" textLength="45" lengthAdjust="spacing">#endpoaching</text>
<text font-size="11" font-weight="bold" fill="#c9471f" class="d"><textPath href="#arc" textLength="132" lengthAdjust="spacingAndGlyphs">Wildlife Conservation Day</textPath></text>
<path d="M314 830l8-4 8-3 8-4M328 813l8-3M330 822l14-3" stroke="#706a3c" fill="none" stroke-width="1.300"/>

<!-- T7/T8 peeking -->
<rect x="96" y="957" width="152" height="3" fill="#e9dcc6"/><rect x="256" y="957" width="152" height="3" fill="#fff3c4"/>
</svg>
</body></html>
